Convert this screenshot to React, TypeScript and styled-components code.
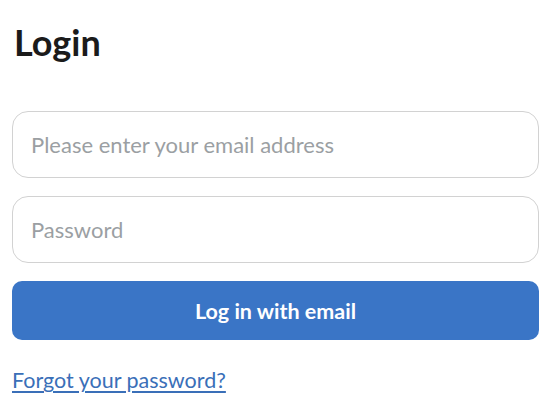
import React from "react";
import styled, { createGlobalStyle } from "styled-components";

const Global = createGlobalStyle`
  html, body { margin: 0; padding: 0; background: #fff; }
  body { font-family: "Lato", "Open Sans", sans-serif; }
  * { box-sizing: border-box; }
`;

const Page = styled.div`
  width: 556px;
  padding: 20px 17px 0 12px;
  display: flex;
  flex-direction: column;
`;

const Title = styled.h1`
  margin: 0 0 0 2px;
  font-size: 36px;
  line-height: 44px;
  font-weight: 700;
  color: #1b1b1b;
`;

const Form = styled.form`
  margin-top: 47px;
  display: flex;
  flex-direction: column;
  gap: 18px;
`;

const Input = styled.input`
  height: 67px;
  width: 100%;
  border: 1px solid #d2d2d2;
  border-radius: 16px;
  padding: 0 18px;
  font-family: "Lato", sans-serif;
  font-size: 22px;
  color: #222;
  outline: none;
  &::placeholder { color: #9b9fa3; }
`;

const Button = styled.button`
  height: 59px;
  width: 100%;
  border: none;
  border-radius: 10px;
  background: #3a75c6;
  color: #fff;
  font-family: "Lato", sans-serif;
  font-size: 21.5px;
  font-weight: 700;
`;

const Link = styled.a`
  margin-top: 27px;
  align-self: flex-start;
  color: #3a6fb8;
  font-size: 21.5px;
  text-decoration: underline;
  text-underline-offset: 3px;
`;

export default function App() {
  return (
    <>
      <Global />
      <Page>
        <Title>Login</Title>
        <Form onSubmit={(e) => e.preventDefault()}>
          <Input type="email" placeholder="Please enter your email address" />
          <Input type="password" placeholder="Password" />
          <Button type="submit">Log in with email</Button>
        </Form>
        <Link href="#">Forgot your password?</Link>
      </Page>
    </>
  );
}
